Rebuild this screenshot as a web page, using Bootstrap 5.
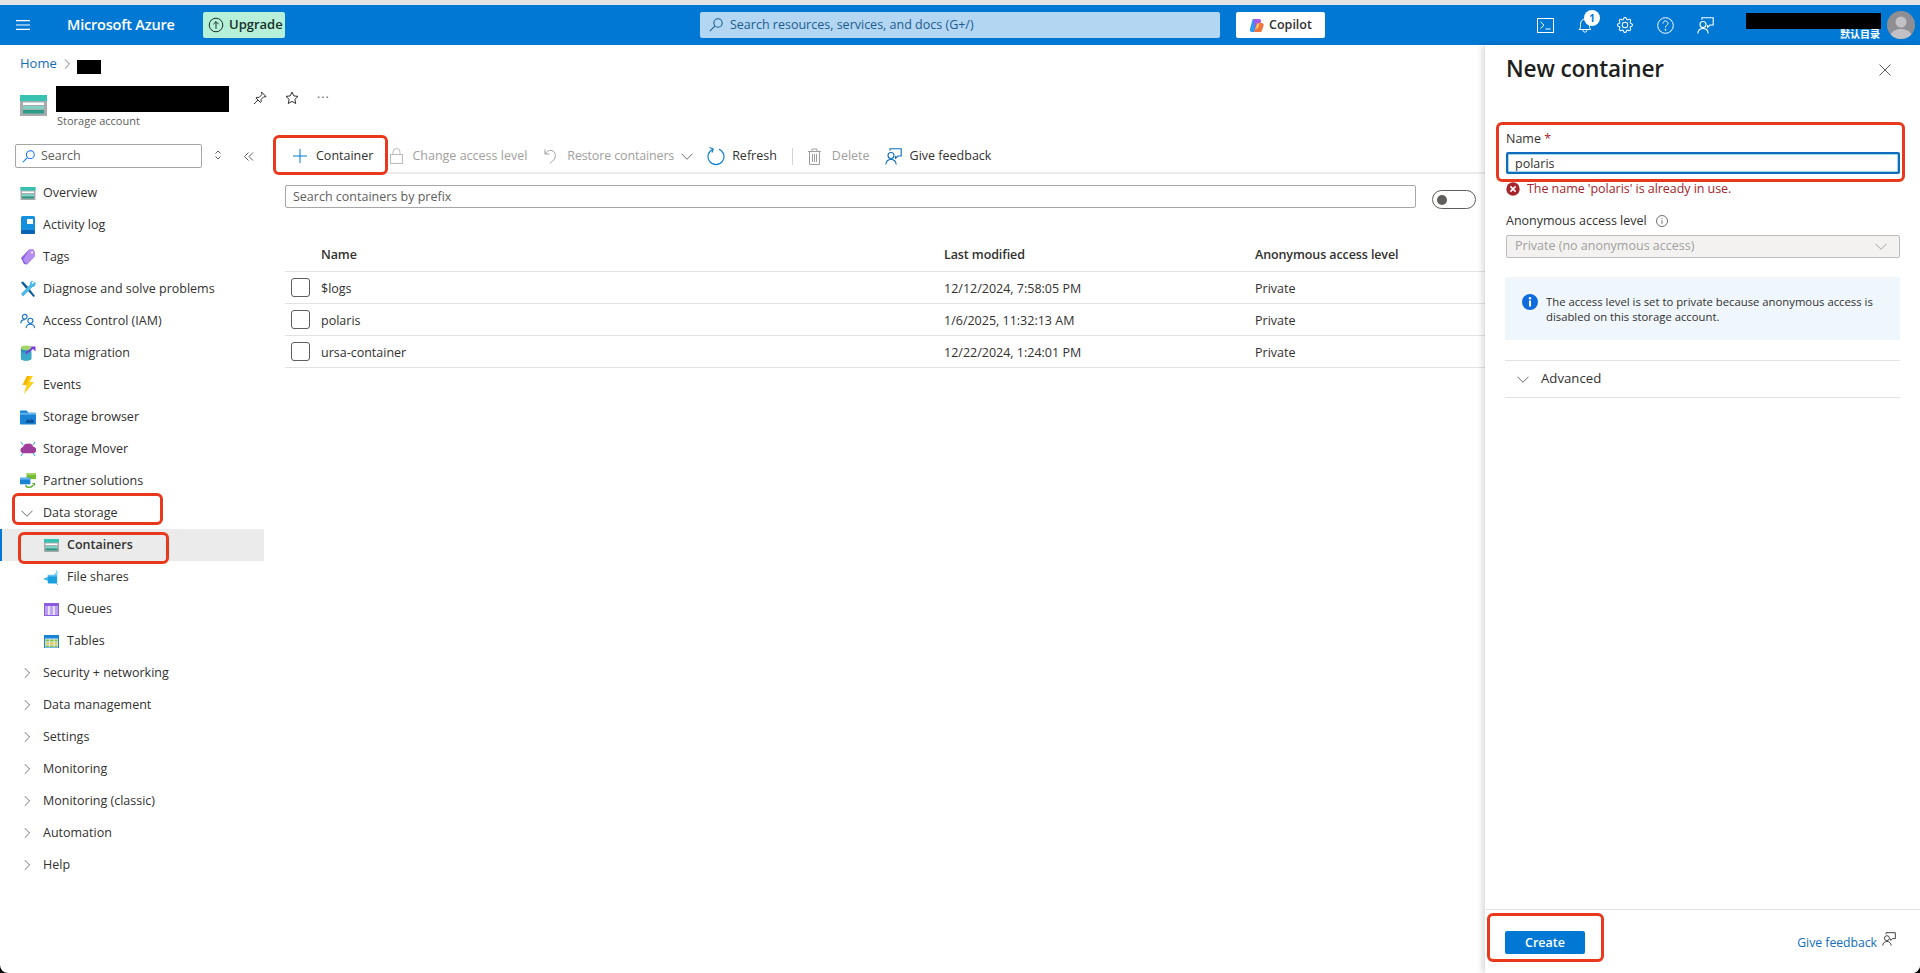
<!DOCTYPE html>
<html lang="en">
<head>
<meta charset="UTF-8">
<title>New container - Microsoft Azure</title>
<link href="https://cdn.jsdelivr.net/npm/bootstrap@5.3.0/dist/css/bootstrap.min.css" rel="stylesheet">
<style>
  html, body { height: 100%; background: #000; overflow: hidden; }
  body { font-family: "Open Sans", "Noto Sans CJK SC", sans-serif; font-size: 12.5px; color: #323130; }
  svg { display: block; flex: none; }
  .app { height: 973px; background: #fff; border-radius: 0 0 8px 8px; overflow: hidden; border-top: 5px solid #e3e3e3; }

  /* top bar */
  .azbar { height: 40px; background: #0078d4; color: #fff; }
  .burger { width: 67px; padding-left: 16px; }
  .brand { width: 136px; font-size: 14.5px; font-weight: 600; letter-spacing: -.2px; }
  .upgrade { width: 82px; height: 26px; margin-top: 7px; background: #b7f0d9; color: #16302a; border-radius: 2px; font-weight: 600; font-size: 13px; gap: 5px; padding-left: 5px; }
  .globalsearch { width: 520px; height: 26px; margin: 7px 0 0 415px; background: #b3d6f2; border-radius: 2px; color: #1c5c8e; padding-left: 9px; gap: 7px; }
  .copilot { width: 89px; height: 26px; margin: 7px 0 0 16px; background: #fff; color: #323130; font-weight: 600; border-radius: 2px; justify-content: center; gap: 5px; }
  .baricons { margin-left: 200px; width: 221px; }
  .baricon { width: 40px; display: flex; justify-content: center; position: relative; }
  .bellcount { position: absolute; left: 19px; top: -7px; width: 16px; height: 16px; border-radius: 50%; background: #fff; color: #0078d4; font-size: 10px; font-weight: 700; text-align: center; line-height: 16px; }
  .acct { width: 135px; margin-left: 0; text-align: right; }
  .acctblack { height: 16px; background: #000; margin-top: 8px; }
  .acctdir { font-size: 10px; font-weight: 700; line-height: 11px; margin-top: 0; padding-right: 1px; }
  .avatar { margin: 6px 0 0 6px; }

  /* left page */
  .pageleft { width: 1485px; }
  .crumb { height: 36px; padding: 2px 0 0 20px; gap: 7px; }
  .crumb a { color: #0f6cbd; text-decoration: none; font-size: 13px; }
  .crumbblack { width: 24px; height: 14px; background: #000; margin: 5px 0 0 0; }
  .reshead { height: 51px; position: relative; padding-left: 20px; }
  .resicon { margin-top: 14px; }
  .resname { width: 173px; height: 26px; background: #000; margin: 5px 0 0 9px; }
  .resname-sub { font-size: 11px; color: #605e5c; line-height: 14px; margin: 2px 0 0 10px; }
  .restools { gap: 18px; margin: 10px 0 0 24px; }
  .dotsbtn { color: #605e5c; letter-spacing: 1px; line-height: 14px; }

  /* sidebar */
  .sidenav { width: 264px; padding-top: 12px; }
  .sidesearch { height: 33px; padding-left: 15px; }
  .sidebox { width: 187px; height: 24px; border: 1px solid #a6a6a6; border-radius: 2px; padding-left: 6px; gap: 6px; color: #605e5c; }
  .updown { margin: 4px 0 0 11px; }
  .collapser { margin: 8px 0 0 21px; }
  .navrow { height: 32px; padding-left: 20px; gap: 7px; position: relative; }
  .navchev { padding-left: 24px; gap: 13px; }
  .navopen { padding-left: 21px; gap: 10px; }
  .navsub { padding-left: 44px; gap: 8px; }
  .navactive { background: #ebebeb; font-weight: 600; box-shadow: inset 2px 0 0 #0078d4; }

  /* annotations drawn on the screenshot */
  .redbox { position: absolute; border: 3px solid #e8391d; border-radius: 6px; pointer-events: none; }
  .red-store { left: 12px; top: -4px; width: 151px; height: 32px; }
  .red-cont { left: 18px; top: 3px; width: 151px; height: 32px; }
  .red-new { left: 0; top: 0; width: 115px; height: 40px; }
  .red-name { left: -10px; top: -7px; width: 409px; height: 60px; }
  .red-create { left: 2px; top: 3px; width: 117px; height: 49px; }

  /* main column */
  .mainpane { width: 1212px; margin-left: 9px; padding-top: 3px; }
  .cmdbar { height: 39px; border-bottom: 2px solid #edebe9; position: relative; padding-top: 5px; }
  .cmd { gap: 7px; white-space: nowrap; }
  .cmd-off { color: #a19f9d; }
  .cmdsep { width: 1px; height: 17px; background: #d6d4d2; }
  .cmd-access { margin-left: 17px; gap: 9px; }
  .cmd-restore { margin-left: 17px; letter-spacing: -.15px; }
  .cmd-restore .cmd-label { margin-left: 3px; }
  .cmd-refresh { margin-left: 14px; gap: 7px; }
  .cmd-feed { margin-left: 15px; gap: 8px; }
  .filterrow { padding: 11px 0 0 12px; }
  .filterbox { width: 1131px; height: 23px; border: 1px solid #a6a6a6; border-radius: 2px; padding-left: 7px; color: #605e5c; line-height: 21px; }
  .togglesw { width: 44px; height: 19px; border: 1px solid #605e5c; border-radius: 10px; margin: 5px 0 0 16px; padding: 4px 0 0 4px; }
  .togglesw i { display: block; width: 10px; height: 10px; border-radius: 50%; background: #605e5c; }
  .bloblist { margin: 26px 0 0 12px; width: 1200px; table-layout: fixed; color: #323130; }
  .bloblist th, .bloblist td { padding: 5px 0 0; height: 32px; vertical-align: middle; border-color: #e4e3e1; font-weight: 400; background: none; color: #323130; }
  .bloblist thead th { height: 36px; font-weight: 600; padding-top: 6px; letter-spacing: -.1px; }
  .bloblist td:first-child { padding-top: 0; }
  .tick { width: 19px; height: 19px; border: 1.3px solid #605e5c; border-radius: 3px; margin-left: 6px; }

  /* side panel */
  .bladepanel { width: 435px; box-shadow: -3px 0 6px rgba(0,0,0,.14); background: #fff; position: relative; }
  .bladetop { height: 49px; padding: 0 0 0 21px; }
  .bladetitle { font-size: 22.6px; font-weight: 600; color: #201f1e; margin: 0; line-height: 28px; margin-top: 10px; letter-spacing: -.15px; }
  .bladeclose { margin: 19px 29px 0 auto; }
  .bladebody { padding: 35px 20px 0 21px; }
  .namewrap { position: relative; }
  .fieldlabel { line-height: 18px; height: 18px; margin-bottom: 5px; padding-top: 1px; }
  .reqstar { color: #a4262c; }
  .nameinput { height: 22px; border: 2px solid #0f6cbd; border-radius: 2px; padding: 1px 0 0 7px; line-height: 18px; width: 394px; box-shadow: 0 0 0 .5px #45b0d6 inset; }
  .errline { color: #a4262c; margin-top: 7px; height: 16px; gap: 7px; line-height: 16px; letter-spacing: -.05px; }
  .accesslabel { margin: 15px 0 5px; gap: 9px; padding-top: 0; }
  .lockedsel { height: 23px; width: 394px; background: #f3f2f1; border: 1px solid #bdbbb9; border-radius: 2px; padding: 0 8px 0 8px; color: #a19f9d; }
  .infonote { width: 395px; height: 63px; background: #eff6fc; margin: 19px 0 0 -1px; padding: 17px 0 0 17px; gap: 8px; font-size: 11.3px; line-height: 15px; border-radius: 2px; }
  .advrow { width: 395px; height: 38px; margin: 20px 0 0 -1px; border-top: 1px solid #e4e3e1; border-bottom: 1px solid #e4e3e1; padding-left: 12px; gap: 12px; font-size: 13.2px; }
  .bladefoot { position: relative; height: 64px; margin-top: auto; border-top: 1px solid #e4e3e1; padding: 21px 24px 0 20px; }
  .createbtn { width: 80px; height: 23px; padding: 0; background: #0078d4; border: 0; border-radius: 2px; color: #fff; font-size: 12.5px; font-weight: 600; line-height: 23px; }
  .footfeed { margin: 3px 0 0 auto; color: #0f6cbd; gap: 5px; font-size: 12.2px; }
  .footfeed svg { margin-top: -2px; color: #323130; }
</style>
</head>
<body>

<svg width="0" height="0" style="position:absolute">
  <defs>
    <symbol id="i-store" viewBox="0 0 27 21">
      <rect width="27" height="21" fill="#a9aaab"/>
      <rect width="27" height="6" fill="#37c2b1"/>
      <rect x="3" y="7.500" width="21" height="2.500" fill="#fff"/>
      <rect x="3" y="11" width="21" height="3" fill="#7fd2c4"/>
      <rect x="3" y="15" width="21" height="3.500" fill="#2a9d8a"/>
    </symbol>
    <symbol id="i-log" viewBox="0 0 16 18">
      <rect x="1" width="14" height="18" rx="1.500" fill="#1490df"/>
      <rect x="1" y="14" width="14" height="4" rx="1.500" fill="#0a62b3"/>
      <rect x="7" y="3" width="6" height="5" fill="#fff"/>
    </symbol>
    <symbol id="i-tag" viewBox="0 0 16 18">
      <path d="M1 10 9 1.500l4.500 0 1.500 3.500v3L7 16.500 4 16z" fill="#8c5be0"/>
      <path d="M9 1.500h4.500L15 5v3L7 16.500 3 12z" fill="#b48ef0"/>
      <circle cx="12" cy="4.500" r="1" fill="#fff"/>
    </symbol>
    <symbol id="i-tools" viewBox="0 0 16 16">
      <path d="M1 1.500 3 .5 9 7 11.500 10.500 15 15l-1.500 1L10 12 7.500 9.500z" fill="#0a5a97"/>
      <path d="M15 .5 12.500 3l-1-1L13.500 0C11 -.5 9.500 1 10 3.500L1 13l2 2.500 9.500-9.500C15 6.500 16.500 3 15 .5z" fill="#4fb9e6"/>
    </symbol>
    <symbol id="i-iam" viewBox="0 0 17 16" fill="none" stroke="#1a73c8" stroke-width="1.200">
      <circle cx="5" cy="3.500" r="2.500"/>
      <path d="M.8 10.500C1 7.500 3 6.500 5 6.500"/>
      <circle cx="11" cy="7.800" r="2.700"/>
      <path d="M6.500 15.500c.3-2.500 2-4 4.500-4s4.200 1.500 4.500 4"/>
    </symbol>
    <symbol id="i-migr" viewBox="0 0 17 17">
      <path d="M1 3v11.500c0 1 2.500 2 5.500 2s5.500-1 5.500-2V3z" fill="#2b93b8"/>
      <path d="M1 8v6.500c0 1 2.500 2 5.500 2s5.500-1 5.500-2V8z" fill="#3aa8c8"/>
      <ellipse cx="6.500" cy="3" rx="5.500" ry="2.500" fill="#a6d468"/>
      <path d="M6 9 14 3" stroke="#773adc" stroke-width="2"/>
      <path d="M11 1.500h5.500V7z" fill="#773adc"/>
    </symbol>
    <symbol id="i-bolt" viewBox="0 0 14 18">
      <path d="M6 0h6L8.500 6H13L3 18l2.500-9H1.500z" fill="#fcd116"/>
      <path d="M6 0h3L5 9H1.500z" fill="#f7b500"/>
    </symbol>
    <symbol id="i-folder" viewBox="0 0 17 15">
      <path d="M0 1a1 1 0 0 1 1-1h6l2 2.500h7a1 1 0 0 1 1 1V14a1 1 0 0 1-1 1H1a1 1 0 0 1-1-1z" fill="#1a83d6"/>
      <rect y="2.500" width="17" height="2" fill="#64b5ec"/>
      <path d="M6 12l2.500-3 2 2 2-2 2.500 2.500V13H6z" fill="#0b4f92"/>
    </symbol>
    <symbol id="i-mover" viewBox="0 0 17 16">
      <path d="M3.500 12.500a3.400 3.400 0 0 1-.4-6.700A4.500 4.500 0 0 1 8.800 2.500a4 4 0 0 1 5.200 3.200A3.400 3.400 0 0 1 13.500 12.500z" fill="#a13d9a"/>
      <g stroke="#3fb4e6" stroke-width="1.200"><path d="M1 .5l2 3M16 .5l-2 3M1 15.500l2-3M16 15.500l-2-3"/></g>
    </symbol>
    <symbol id="i-partner" viewBox="0 0 17 17">
      <rect x="7" y="0" width="10" height="6.500" fill="#76bc2d"/>
      <rect x="7" y="0" width="10" height="2" fill="#a6d468"/>
      <rect y="5" width="11" height="7" fill="#1a83d6"/>
      <rect y="5" width="11" height="2" fill="#64b5ec"/>
      <path d="M6 13c1 3 6 3 8 0" fill="none" stroke="#5ab030" stroke-width="1.500"/>
      <path d="M12.500 10.500h3.500v3.500z" fill="#5ab030"/>
    </symbol>
    <symbol id="i-cont" viewBox="0 0 15 13">
      <rect width="15" height="13" fill="#a9aaab"/>
      <rect width="15" height="3.500" fill="#37c2b1"/>
      <rect x="1.500" y="4.500" width="12" height="1.500" fill="#fff"/>
      <rect x="1.500" y="7" width="12" height="2" fill="#7fd2c4"/>
      <rect x="1.500" y="9.500" width="12" height="2" fill="#2a9d8a"/>
    </symbol>
    <symbol id="i-share" viewBox="0 0 16 16">
      <path d="M4 6h10v8.500H5.500A1.500 1.500 0 0 1 4 13z" fill="#1a9fe0"/>
      <path d="M4 5h7l1-1.500h2V7H4z" fill="#5cc4ee"/>
      <path d="M0 9.500 4 8v3zM13 .5l1.500 3M14 14.500l.5 1.500" stroke="#3fb4e6" stroke-width="1" fill="#3fb4e6"/>
    </symbol>
    <symbol id="i-queue" viewBox="0 0 15 13">
      <rect width="15" height="13" fill="#8c5be0"/>
      <rect x="1" y="3" width="13" height="9" fill="#e9defb"/>
      <path d="M4 3v9H1V3zM8.800 3v9H6.200V3zM14 3v9h-3V3z" fill="#b9a0ee"/>
    </symbol>
    <symbol id="i-table" viewBox="0 0 15 13">
      <rect width="15" height="13" fill="#1a83d6"/>
      <rect x="1" y="3.500" width="13" height="9" fill="#d8ecfa"/>
      <path d="M1.500 4.500h3.500v2H1.500zM6 4.500h3.500v2H6zM10.500 4.500h3v2h-3z" fill="#88bf3f"/>
      <path d="M1.500 7.500h3.500v2H1.500zM6 7.500h3.500v2H6zM10.500 7.500h3v2h-3z" fill="#e5c53a"/>
      <path d="M1.500 10.500h3.500v1.500H1.500zM6 10.500h3.500v1.500H6zM10.500 10.500h3v1.500h-3z" fill="#88bf3f"/>
    </symbol>
    <symbol id="i-right" viewBox="0 0 7 12" fill="none" stroke="#605e5c" stroke-width="1"><path d="M1 .5 6.500 6 1 11.500"/></symbol>
    <symbol id="i-down" viewBox="0 0 13 7" fill="none" stroke="#605e5c" stroke-width="1"><path d="M.5 .5 6.500 6.500 12.500 .5"/></symbol>
    <symbol id="i-feed" viewBox="0 0 17 17" fill="none" stroke="currentColor" stroke-width="1.100">
      <circle cx="6" cy="7.500" r="3"/>
      <path d="M.8 16.500c.3-3 2.400-5 5.200-5s4.900 2 5.200 5"/>
      <path d="M5 2.800V.8h11.200V8h-3.200l-2.400 2.300V8"/>
    </symbol>
    <symbol id="i-lens" viewBox="0 0 14 14" fill="none" stroke="currentColor" stroke-width="1.100">
      <circle cx="9" cy="5" r="4.200"/><path d="M5.800 8.200.8 13.200"/>
    </symbol>
  </defs>
</svg>

<div class="app d-flex flex-column">

  <header class="azbar d-flex flex-none">
    <div class="burger d-flex align-items-center">
      <svg width="14" height="10" viewBox="0 0 14 10" fill="none" stroke="#fff" stroke-width="1.100"><path d="M0 .6h14M0 5h14M0 9.400h14"/></svg>
    </div>
    <div class="brand d-flex align-items-center">Microsoft Azure</div>
    <div class="upgrade d-flex align-items-center">
      <svg width="16" height="16" viewBox="0 0 16 16" fill="none" stroke="#16302a" stroke-width="1"><circle cx="8" cy="8" r="6.800"/><path d="M8 11.800V4.800M5.400 7.200 8 4.600l2.600 2.600"/></svg>
      Upgrade
    </div>
    <div class="globalsearch d-flex align-items-center">
      <svg width="14" height="14"><use href="#i-lens"/></svg>
      Search resources, services, and docs (G+/)
    </div>
    <div class="copilot d-flex align-items-center">
      <svg width="15" height="15" viewBox="0 0 15 15">
        <path d="M5 1h3.500L5.500 14H3C1 14 .5 12.500 1 11L3.200 2.500C3.500 1.500 4 1 5 1z" fill="#2f9bf0"/>
        <path d="M4.500 1H10c1.300 0 1.800.6 2.200 2L9.500 10H6z" fill="#a85ae6"/>
        <path d="M9 5h3.500c1.800 0 2.500 1.300 2 2.800L13 12.500c-.4 1.200-1.200 1.500-2.300 1.500H5z" fill="#f0743c"/>
        <path d="M6.500 10.500 8 5.500h2.500L9 10.500z" fill="#f5c84a"/>
      </svg>
      Copilot
    </div>
    <div class="baricons d-flex align-items-center">
      <div class="baricon">
        <svg width="17" height="15" viewBox="0 0 17 15" fill="none" stroke="#fff" stroke-width="1"><rect x=".5" y=".5" width="16" height="14"/><path d="M3.500 3.800 7 7.200l-3.500 3.400M8.500 11h5"/></svg>
      </div>
      <div class="baricon">
        <svg width="14" height="16" viewBox="0 0 14 16" fill="none" stroke="#fff" stroke-width="1"><path d="M1 12.500c1.500-1 1.500-2.500 1.500-5C2.500 4 4.500 2 7 2s4.500 2 4.500 5.500c0 2.500 0 4 1.500 5zM5 12.800c0 1.500.9 2.300 2 2.300s2-.8 2-2.300"/></svg>
        <span class="bellcount">1</span>
      </div>
      <div class="baricon">
        <svg width="16" height="16" viewBox="0 0 16 16" fill="#fff"><path d="M8 4.754a3.246 3.246 0 1 0 0 6.492 3.246 3.246 0 0 0 0-6.492zM5.754 8a2.246 2.246 0 1 1 4.492 0 2.246 2.246 0 0 1-4.492 0z"/><path d="M9.796 1.343c-.527-1.790-3.065-1.790-3.592 0l-.094.319a.873.873 0 0 1-1.255.52l-.292-.16c-1.640-.892-3.433.902-2.540 2.541l.159.292a.873.873 0 0 1-.52 1.255l-.319.094c-1.790.527-1.790 3.065 0 3.592l.319.094a.873.873 0 0 1 .52 1.255l-.16.292c-.892 1.640.901 3.434 2.541 2.540l.292-.159a.873.873 0 0 1 1.255.52l.094.319c.527 1.790 3.065 1.790 3.592 0l.094-.319a.873.873 0 0 1 1.255-.52l.292.16c1.640.893 3.434-.902 2.540-2.541l-.159-.292a.873.873 0 0 1 .52-1.255l.319-.094c1.790-.527 1.790-3.065 0-3.592l-.319-.094a.873.873 0 0 1-.52-1.255l.16-.292c.893-1.640-.902-3.433-2.541-2.540l-.292.159a.873.873 0 0 1-1.255-.52l-.094-.319zm-2.633.283c.246-.835 1.428-.835 1.674 0l.094.319a1.873 1.873 0 0 0 2.693 1.115l.291-.16c.764-.415 1.600.42 1.184 1.185l-.159.292a1.873 1.873 0 0 0 1.116 2.692l.318.094c.835.246.835 1.428 0 1.674l-.319.094a1.873 1.873 0 0 0-1.115 2.693l.16.291c.415.764-.42 1.600-1.185 1.184l-.291-.159a1.873 1.873 0 0 0-2.693 1.116l-.094.318c-.246.835-1.428.835-1.674 0l-.094-.319a1.873 1.873 0 0 0-2.692-1.115l-.292.16c-.764.415-1.600-.42-1.184-1.185l.159-.291A1.873 1.873 0 0 0 1.945 8.930l-.319-.094c-.835-.246-.835-1.428 0-1.674l.319-.094A1.873 1.873 0 0 0 3.060 4.377l-.16-.292c-.415-.764.42-1.600 1.185-1.184l.292.159a1.873 1.873 0 0 0 2.692-1.115l.094-.319z"/></svg>
      </div>
      <div class="baricon">
        <svg width="17" height="17" viewBox="0 0 17 17" fill="none" stroke="#fff" stroke-width="1"><circle cx="8.500" cy="8.500" r="7.800"/><path d="M6 6.500C6 4.800 7.200 4 8.500 4S11 4.900 11 6.300c0 2-2.500 2-2.500 4.200"/><circle cx="8.500" cy="12.800" r=".5" fill="#fff"/></svg>
      </div>
      <div class="baricon text-white">
        <svg width="17" height="17"><use href="#i-feed"/></svg>
      </div>
    </div>
    <div class="acct">
      <div class="acctblack"></div>
      <div class="acctdir">默认目录</div>
    </div>
    <svg class="avatar" width="28" height="28" viewBox="0 0 28 28">
      <defs><clipPath id="avclip"><circle cx="14" cy="14" r="14"/></clipPath></defs>
      <g clip-path="url(#avclip)">
        <rect width="28" height="28" fill="#8f8f93"/>
        <circle cx="14" cy="11" r="5.500" fill="#c2c2c6"/>
        <ellipse cx="14" cy="26" rx="11" ry="8" fill="#c2c2c6"/>
      </g>
    </svg>
  </header>

  <div class="d-flex flex-grow-1" style="min-height:0">
    <div class="pageleft">
      <div class="crumb d-flex align-items-center">
        <a href="#">Home</a>
        <svg width="6" height="10"><use href="#i-right"/></svg>
        <span class="crumbblack"></span>
      </div>
      <div class="reshead d-flex">
        <svg class="resicon" width="27" height="21"><use href="#i-store"/></svg>
        <div>
          <div class="resname"></div>
          <div class="resname-sub">Storage account</div>
        </div>
        <div class="restools d-flex align-items-start">
          <svg width="14" height="14" viewBox="0 0 14 14" fill="none" stroke="#323130" stroke-width="1"><path d="M8.500 1 13 5.500 12 6l-1-.5-3 3 .2 2.300-.7.700L3 7l.7-.7L6 6.500l3-3L8.500 2.500zM5 9l-4 4"/></svg>
          <svg width="14" height="14" viewBox="0 0 14 14" fill="none" stroke="#323130" stroke-width="1"><path d="M7 1l1.800 3.900 4.200.5-3.100 2.900.8 4.200L7 10.400l-3.700 2.100.8-4.200L1 5.400l4.200-.5z"/></svg>
          <span class="dotsbtn">···</span>
        </div>
      </div>

      <div class="d-flex">
        <nav class="sidenav">
          <div class="sidesearch d-flex align-items-start">
            <div class="sidebox d-flex align-items-center">
              <svg width="13" height="13" class="text-primary"><use href="#i-lens"/></svg>
              Search
            </div>
            <svg class="updown" width="10" height="14" viewBox="0 0 10 14" fill="none" stroke="#605e5c" stroke-width="1"><path d="M2.500 5.500 5 3l2.500 2.500M2.500 8.500 5 11l2.500-2.500"/></svg>
            <svg class="collapser" width="10" height="9" viewBox="0 0 10 9" fill="none" stroke="#605e5c" stroke-width="1"><path d="M4.500.5.500 4.500l4 4M9 .5l-4 4 4 4"/></svg>
          </div>
          <div class="navrow d-flex align-items-center"><svg width="16" height="13"><use href="#i-cont"/></svg>Overview</div>
          <div class="navrow d-flex align-items-center"><svg width="16" height="18"><use href="#i-log"/></svg>Activity log</div>
          <div class="navrow d-flex align-items-center"><svg width="16" height="18"><use href="#i-tag"/></svg>Tags</div>
          <div class="navrow d-flex align-items-center"><svg width="16" height="16"><use href="#i-tools"/></svg>Diagnose and solve problems</div>
          <div class="navrow d-flex align-items-center"><svg width="16" height="16"><use href="#i-iam"/></svg>Access Control (IAM)</div>
          <div class="navrow d-flex align-items-center"><svg width="16" height="16"><use href="#i-migr"/></svg>Data migration</div>
          <div class="navrow d-flex align-items-center"><svg width="16" height="18"><use href="#i-bolt"/></svg>Events</div>
          <div class="navrow d-flex align-items-center"><svg width="16" height="15"><use href="#i-folder"/></svg>Storage browser</div>
          <div class="navrow d-flex align-items-center"><svg width="16" height="16"><use href="#i-mover"/></svg>Storage Mover</div>
          <div class="navrow d-flex align-items-center"><svg width="16" height="16"><use href="#i-partner"/></svg>Partner solutions</div>
          <div class="navrow navopen d-flex align-items-center"><svg width="12" height="7"><use href="#i-down"/></svg>Data storage<span class="redbox red-store"></span></div>
          <div class="navrow navsub navactive d-flex align-items-center"><svg width="15" height="13"><use href="#i-cont"/></svg>Containers<span class="redbox red-cont"></span></div>
          <div class="navrow navsub d-flex align-items-center"><svg width="15" height="15"><use href="#i-share"/></svg>File shares</div>
          <div class="navrow navsub d-flex align-items-center"><svg width="15" height="13"><use href="#i-queue"/></svg>Queues</div>
          <div class="navrow navsub d-flex align-items-center"><svg width="15" height="13"><use href="#i-table"/></svg>Tables</div>
          <div class="navrow navchev d-flex align-items-center"><svg width="6" height="12"><use href="#i-right"/></svg>Security + networking</div>
          <div class="navrow navchev d-flex align-items-center"><svg width="6" height="12"><use href="#i-right"/></svg>Data management</div>
          <div class="navrow navchev d-flex align-items-center"><svg width="6" height="12"><use href="#i-right"/></svg>Settings</div>
          <div class="navrow navchev d-flex align-items-center"><svg width="6" height="12"><use href="#i-right"/></svg>Monitoring</div>
          <div class="navrow navchev d-flex align-items-center"><svg width="6" height="12"><use href="#i-right"/></svg>Monitoring (classic)</div>
          <div class="navrow navchev d-flex align-items-center"><svg width="6" height="12"><use href="#i-right"/></svg>Automation</div>
          <div class="navrow navchev d-flex align-items-center"><svg width="6" height="12"><use href="#i-right"/></svg>Help</div>
        </nav>

        <main class="mainpane">
          <div class="cmdbar d-flex align-items-center">
            <span class="redbox red-new"></span>
            <div class="cmd d-flex align-items-center" style="margin-left:20px">
              <svg width="14" height="14" viewBox="0 0 14 14" stroke="#0078d4" stroke-width="1"><path d="M7 0v14M0 7h14"/></svg>
              <span style="margin-left:2px">Container</span>
            </div>
            <div class="cmd cmd-off cmd-access d-flex align-items-center">
              <svg width="13" height="16" viewBox="0 0 13 16" fill="none" stroke="#bdbbb9" stroke-width="1"><rect x=".5" y="6.500" width="12" height="9"/><path d="M3 6.500V4a3.500 3.500 0 0 1 7 0v2.500"/></svg>
              <span>Change access level</span>
            </div>
            <div class="cmd cmd-off cmd-restore d-flex align-items-center">
              <svg width="13" height="16" viewBox="0 0 13 16" fill="none" stroke="#a19f9d" stroke-width="1"><path d="M1 1.500v4.500h4.500M1 6c2-3 5-4.500 8-3 3 2 3 7 .5 9L6 15.500"/></svg>
              <span class="cmd-label">Restore containers</span>
              <svg width="12" height="7"><use href="#i-down"/></svg>
            </div>
            <div class="cmd cmd-refresh d-flex align-items-center">
              <svg width="18" height="20" viewBox="0 0 18 20" fill="none" stroke="#0f82cf" stroke-width="1.200"><path d="M6 3.200a8 8 0 1 0 6 0"/><path d="M2.500 1.500 6.200 3 5 6.500"/></svg>
              <span>Refresh</span>
            </div>
            <div class="cmdsep" style="margin-left:15px"></div>
            <div class="cmd cmd-off d-flex align-items-center" style="margin-left:15px">
              <svg width="13" height="17" viewBox="0 0 13 17" fill="none" stroke="#a19f9d" stroke-width="1"><path d="M0 3.500h13M4 3.500V1h5v2.500M1.500 3.500v13h10v-13M4.500 6v8M6.500 6v8M8.500 6v8"/></svg>
              <span class="ms-1">Delete</span>
            </div>
            <div class="cmd cmd-feed d-flex align-items-center">
              <svg width="17" height="17" style="color:#0f6cbd"><use href="#i-feed"/></svg>
              <span>Give feedback</span>
            </div>
          </div>

          <div class="filterrow d-flex">
            <div class="filterbox">Search containers by prefix</div>
            <div class="togglesw"><i></i></div>
          </div>

          <table class="table bloblist mb-0">
            <colgroup><col style="width:36px"><col style="width:623px"><col style="width:311px"><col></colgroup>
            <thead>
              <tr><th></th><th>Name</th><th>Last modified</th><th>Anonymous access level</th></tr>
            </thead>
            <tbody>
              <tr><td><div class="tick"></div></td><td>$logs</td><td>12/12/2024, 7:58:05 PM</td><td>Private</td></tr>
              <tr><td><div class="tick"></div></td><td>polaris</td><td>1/6/2025, 11:32:13 AM</td><td>Private</td></tr>
              <tr><td><div class="tick"></div></td><td>ursa-container</td><td>12/22/2024, 1:24:01 PM</td><td>Private</td></tr>
            </tbody>
          </table>
        </main>
      </div>
    </div>

    <aside class="bladepanel d-flex flex-column">
      <div class="bladetop d-flex">
        <h2 class="bladetitle">New container</h2>
        <svg class="bladeclose" width="12" height="12" viewBox="0 0 12 12" fill="none" stroke="#605e5c" stroke-width="1"><path d="M.5 .5l11 11M11.500 .5l-11 11"/></svg>
      </div>
      <div class="bladebody">
        <div class="namewrap">
          <span class="redbox red-name"></span>
          <div class="fieldlabel">Name <span class="reqstar">*</span></div>
          <div class="nameinput">polaris</div>
        </div>
        <div class="errline d-flex align-items-center">
          <svg width="14" height="14" viewBox="0 0 14 14"><circle cx="7" cy="7" r="6.700" fill="#a4262c"/><path d="M4.400 4.400l5.200 5.200M9.600 4.400 4.400 9.600" stroke="#fff" stroke-width="1.600"/></svg>
          The name 'polaris' is already in use.
        </div>
        <div class="fieldlabel accesslabel d-flex align-items-center">
          Anonymous access level
          <svg width="12" height="12" viewBox="0 0 12 12" fill="none" stroke="#605e5c" stroke-width=".9"><circle cx="6" cy="6" r="5.500"/><path d="M6 5.200v3.600M6 3v1"/></svg>
        </div>
        <div class="lockedsel d-flex align-items-center justify-content-between">
          <span>Private (no anonymous access)</span>
          <svg class="me-1" width="12" height="7" style="opacity:.55"><use href="#i-down"/></svg>
        </div>
        <div class="infonote d-flex">
          <svg width="16" height="16" viewBox="0 0 16 16"><circle cx="8" cy="8" r="8" fill="#0f6cdc"/><rect x="7" y="6.500" width="2" height="6" fill="#fff"/><circle cx="8" cy="4.200" r="1.200" fill="#fff"/></svg>
          <div>The access level is set to private because anonymous access is<br>disabled on this storage account.</div>
        </div>
        <div class="advrow d-flex align-items-center">
          <svg width="12" height="7"><use href="#i-down"/></svg>
          Advanced
        </div>
      </div>
      <div class="bladefoot d-flex">
        <span class="redbox red-create"></span>
        <button type="button" class="btn createbtn">Create</button>
        <div class="footfeed d-flex">
          Give feedback
          <svg width="14" height="14"><use href="#i-feed"/></svg>
        </div>
      </div>
    </aside>
  </div>
</div>

<script src="https://cdn.jsdelivr.net/npm/bootstrap@5.3.0/dist/js/bootstrap.bundle.min.js"></script>
</body>
</html>
